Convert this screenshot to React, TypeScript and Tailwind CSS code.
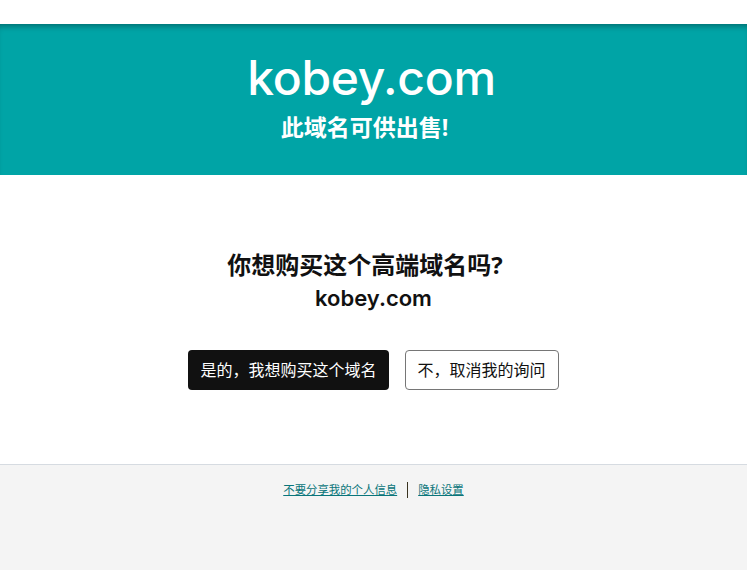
export default function App() {
  const font = { fontFamily: '"Open Sans", "Noto Sans CJK SC", sans-serif' };
  return (
    <div className="min-h-[570px] flex flex-col bg-white text-[#111111]" style={font}>
      <div className="h-[24px] bg-white" />
      <header className="h-[151px] bg-[#00a4a6] shadow-[inset_0_6px_6px_-4px_rgba(0,0,0,0.35)] flex flex-col items-center pt-[24px]">
        <h1 className="text-[48px] leading-[60px] font-medium text-white tracking-[-0.3px] pr-[4px]" style={{ fontFamily: '"Inter", sans-serif' }}>
          kobey.com
        </h1>
        <p className="mt-[4px] pr-[18px] text-[23px] leading-[30px] font-bold text-white">此域名可供出售!</p>
      </header>
      <main className="h-[289px] flex flex-col items-center pt-[73px]">
        <h2 className="pr-[17px] text-[24px] leading-[34px] font-bold">你想购买这个高端域名吗?</h2>
        <p className="mt-[2px] text-[22px] leading-[28px] font-semibold" style={{ fontFamily: '"Inter", sans-serif' }}>
          kobey.com
        </p>
        <div className="mt-[38px] flex gap-[16px]">
          <button className="h-[40px] px-[12px] rounded-[4px] bg-[#111111] text-white text-[16px]">
            是的，我想购买这个域名
          </button>
          <button className="h-[40px] px-[12px] rounded-[4px] border border-[#767676] bg-white text-[#111111] text-[16px]">
            不，取消我的询问
          </button>
        </div>
      </main>
      <footer className="flex-1 border-t border-[#d6dbe1] bg-[#f4f4f4] flex justify-center pt-[16px]">
        <div className="flex items-start text-[11.4px] leading-[18px]">
          <a href="#" className="text-[#09757a] underline">不要分享我的个人信息</a>
          <span className="mx-[10px] mt-[1px] w-[1px] h-[16px] bg-[#3a3320]" />
          <a href="#" className="text-[#09757a] underline">隐私设置</a>
        </div>
      </footer>
    </div>
  );
}
